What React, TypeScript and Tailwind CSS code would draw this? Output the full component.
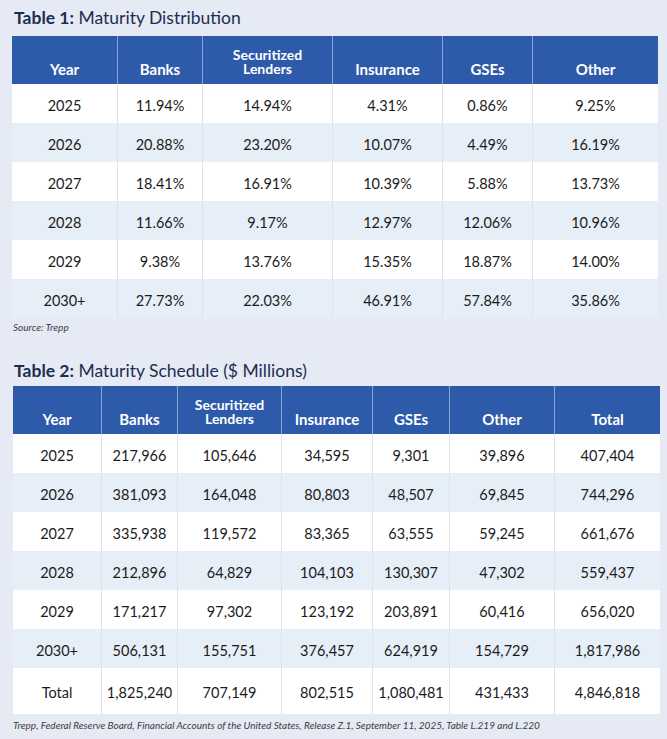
import React from "react";

const t1Head = ["Year", "Banks", "Securitized\nLenders", "Insurance", "GSEs", "Other"];
const t1Rows = [
  ["2025", "11.94%", "14.94%", "4.31%", "0.86%", "9.25%"],
  ["2026", "20.88%", "23.20%", "10.07%", "4.49%", "16.19%"],
  ["2027", "18.41%", "16.91%", "10.39%", "5.88%", "13.73%"],
  ["2028", "11.66%", "9.17%", "12.97%", "12.06%", "10.96%"],
  ["2029", "9.38%", "13.76%", "15.35%", "18.87%", "14.00%"],
  ["2030+", "27.73%", "22.03%", "46.91%", "57.84%", "35.86%"],
];

const t2Head = ["Year", "Banks", "Securitized\nLenders", "Insurance", "GSEs", "Other", "Total"];
const t2Rows = [
  ["2025", "217,966", "105,646", "34,595", "9,301", "39,896", "407,404"],
  ["2026", "381,093", "164,048", "80,803", "48,507", "69,845", "744,296"],
  ["2027", "335,938", "119,572", "83,365", "63,555", "59,245", "661,676"],
  ["2028", "212,896", "64,829", "104,103", "130,307", "47,302", "559,437"],
  ["2029", "171,217", "97,302", "123,192", "203,891", "60,416", "656,020"],
  ["2030+", "506,131", "155,751", "376,457", "624,919", "154,729", "1,817,986"],
];
const t2Total = ["Total", "1,825,240", "707,149", "802,515", "1,080,481", "431,433", "4,846,818"];

function HeadCell({ label, last }: { label: string; last: boolean }) {
  const lines = label.split("\n");
  return (
    <div
      className={`flex flex-col items-center justify-end pb-[8px] h-[48px] bg-[#2e5ba9] text-white font-bold text-[15px] leading-[14px] text-center ${
        last ? "" : "border-r border-[#8aa3d0]"
      }`}
    >
      {lines.map((l, i) => (
        <span key={i} className={`block ${lines.length > 1 ? "text-[14px]" : ""}`}>
          {l}
        </span>
      ))}
    </div>
  );
}

function BodyCell({ v, last, light, h }: { v: string; last: boolean; light: boolean; h: string }) {
  return (
    <div
      className={`flex items-center justify-center pt-[4px] text-[14.5px] text-[#1b1b1b] ${h} ${
        light ? "bg-[#e6eef7]" : "bg-white"
      } ${last ? "" : "border-r border-[#dfe3e9]"}`}
    >
      {v}
    </div>
  );
}

export default function App() {
  return (
    <div
      className="w-[667px] h-[739px] bg-[#e6eaf4] overflow-hidden"
      style={{ fontFamily: "Lato, 'Open Sans', sans-serif" }}
    >
      <div className="pl-[14px] pt-[8px] h-[28px] text-[17.5px] leading-[20px] text-[#1d2d52]">
        <span className="font-bold">Table 1:</span> Maturity Distribution
      </div>
      <div className="ml-[12px] mt-[8px] w-[646px] border-r border-[#d5dbe3]">
        <div className="grid grid-cols-[106px_85px_130px_110px_90px_125px]">
          {t1Head.map((h, i) => (
            <HeadCell key={i} label={h} last={i === t1Head.length - 1} />
          ))}
          {t1Rows.map((r, ri) =>
            r.map((v, ci) => (
              <BodyCell
                key={`${ri}-${ci}`}
                v={v}
                last={ci === r.length - 1}
                light={ri % 2 === 1}
                h="h-[39px]"
              />
            ))
          )}
        </div>
      </div>
      <div className="pl-[13px] mt-[3px] h-[13px] text-[10px] leading-[13px] italic text-[#3d3d3d]">
        Source: Trepp
      </div>
      <div className="pl-[14px] mt-[27px] h-[20px] text-[17.5px] leading-[20px] text-[#1d2d52]">
        <span className="font-bold">Table 2:</span> Maturity Schedule ($ Millions)
      </div>
      <div className="ml-[13px] mt-[5px] w-[647px] border-r border-[#d5dbe3]">
        <div className="grid grid-cols-[89px_76px_104px_91px_77px_105px_105px]">
          {t2Head.map((h, i) => (
            <HeadCell key={i} label={h} last={i === t2Head.length - 1} />
          ))}
          {t2Rows.map((r, ri) =>
            r.map((v, ci) => (
              <BodyCell
                key={`${ri}-${ci}`}
                v={v}
                last={ci === r.length - 1}
                light={ri % 2 === 1}
                h="h-[39px]"
              />
            ))
          )}
          {t2Total.map((v, ci) => (
            <BodyCell key={`t-${ci}`} v={v} last={ci === t2Total.length - 1} light={false} h="h-[46px]" />
          ))}
        </div>
      </div>
      <div className="pl-[13px] mt-[5px] text-[10px] leading-[12px] italic text-[#3d3d3d]">
        Trepp, Federal Reserve Board, Financial Accounts of the United States, Release Z.1, September 11, 2025, Table
        L.219 and L.220
      </div>
    </div>
  );
}
